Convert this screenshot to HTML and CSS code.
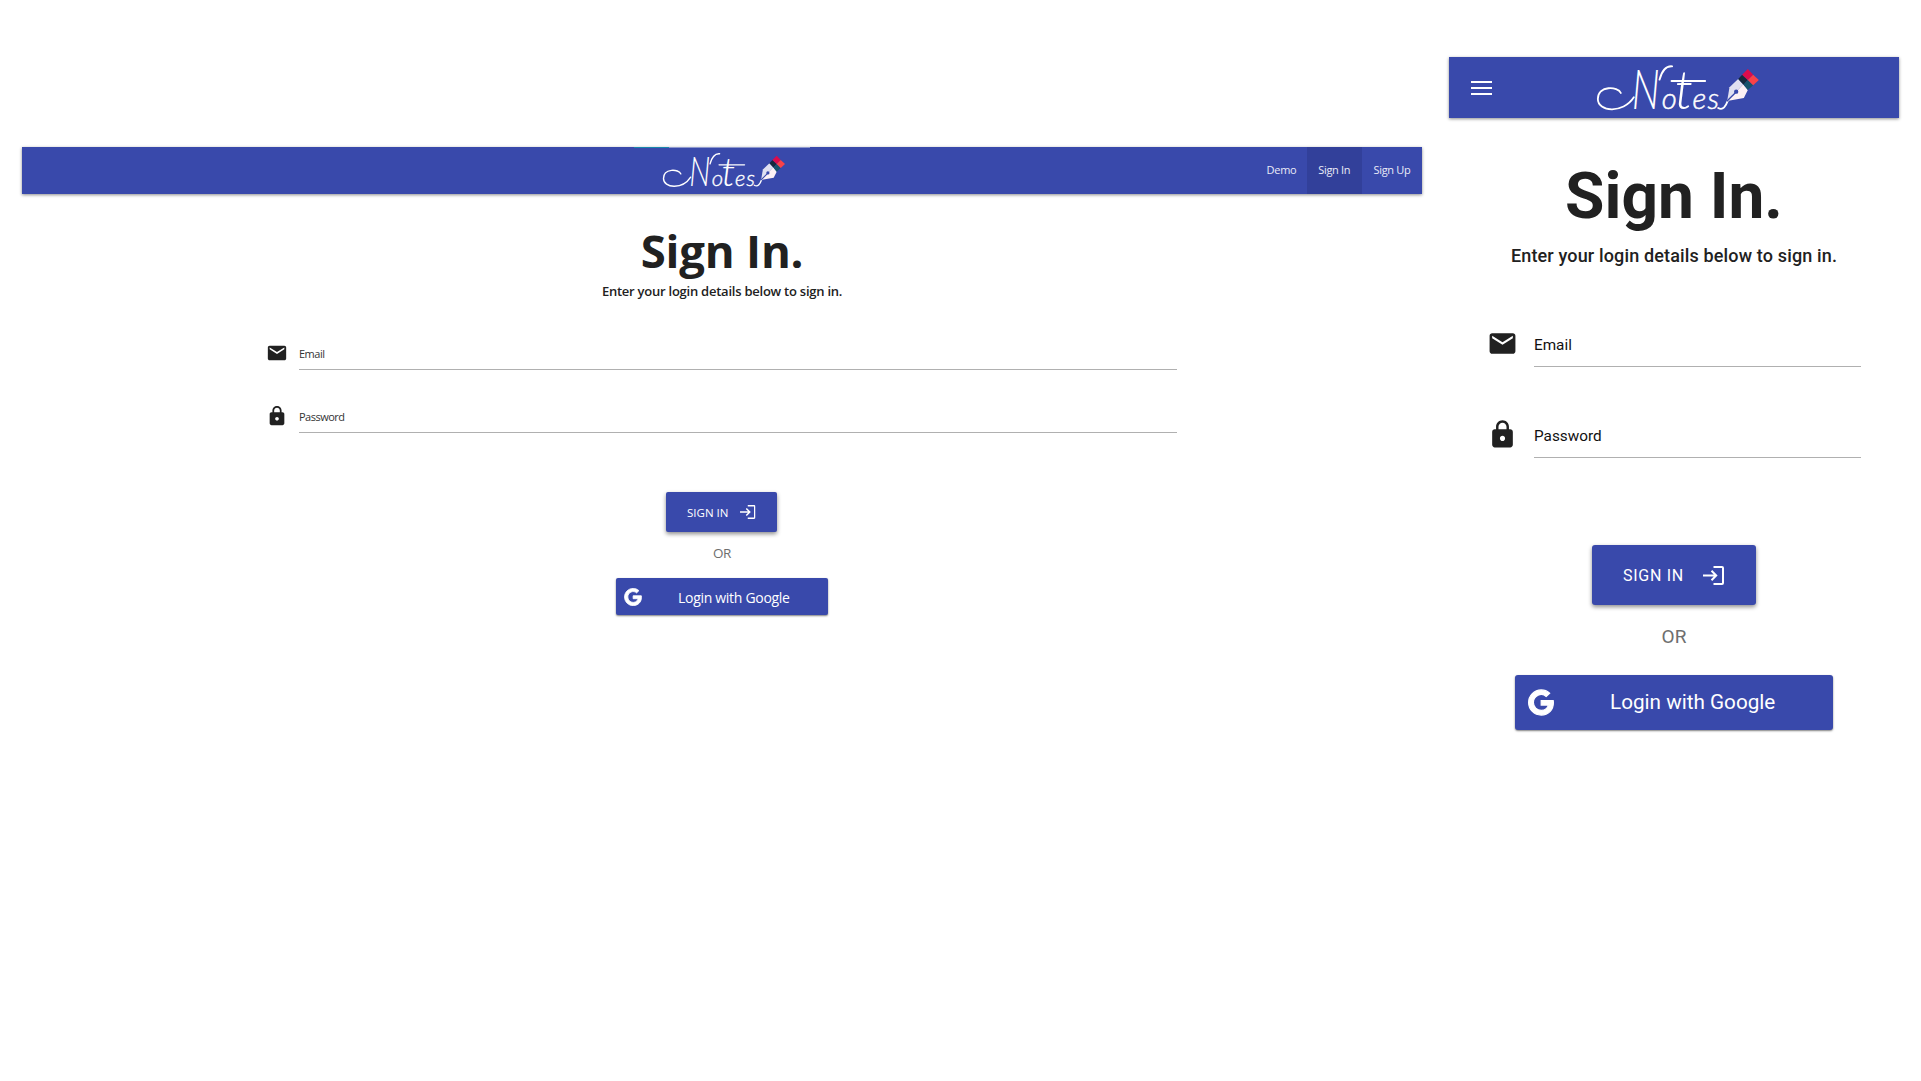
FILE: index.html
```html
<!DOCTYPE html>
<html lang="en">
<head>
<meta charset="utf-8">
<title>Notes – Sign In</title>
<link rel="stylesheet" href="styles.css">
</head>
<body>
<svg class="sprite" aria-hidden="true">
  <symbol id="flourish" viewBox="35 25 485 141" overflow="visible">
    <g fill="none" stroke="#fff" stroke-width="5.500" stroke-linecap="round">
      <path d="M106 112C98 92 37 88 37 130C37 168 112 176 145 125"/>
      <path d="M222 72C229 46 240 30 260 32"/>
      <path d="M258 76H359"/>
      <path d="M398 157C413 166 421 151 427 135"/>
    </g>
    <path fill="#e0e0f1" d="M425 136L432 95L458 70L473 86L452 108Z"/>
    <path fill="#fdf1f5" d="M425 136L452 108L473 86L487 103L475 127Z"/>
    <path stroke="#3949ab" stroke-width="4" d="M424 137L452 109"/>
    <circle cx="452" cy="108" r="6.500" fill="#3949ab"/>
    <path fill="#15293d" d="M458 70L470 57L487 73L474 87Z"/>
    <path fill="#17536b" d="M474 87L487 73L503 89L487 103Z"/>
    <path fill="#dc0c4c" d="M470 57L487 40L503 57L487 73Z"/>
    <path fill="#fa4248" d="M487 73L503 57L520 73L503 89Z"/>
  </symbol>
  <symbol id="mail" viewBox="0 0 24 24"><path d="M20 4H4c-1.100 0-1.990.9-1.990 2L2 18c0 1.100.9 2 2 2h16c1.100 0 2-.9 2-2V6c0-1.100-.9-2-2-2zm0 4l-8 5-8-5V6l8 5 8-5v2z"/></symbol>
  <symbol id="lock" viewBox="0 0 24 24"><path d="M18 8h-1V6c0-2.760-2.240-5-5-5S7 3.240 7 6v2H6c-1.100 0-2 .9-2 2v10c0 1.100.9 2 2 2h12c1.100 0 2-.9 2-2V10c0-1.100-.9-2-2-2zm-6 9c-1.100 0-2-.9-2-2s.9-2 2-2 2 .9 2 2-.9 2-2 2zm3.100-9H8.900V6c0-1.710 1.390-3.100 3.100-3.100s3.100 1.390 3.100 3.100v2z"/></symbol>
  <symbol id="enter" viewBox="0 0 21 19"><path fill="none" stroke="#fff" stroke-width="2" d="M10.500 1H19q1 0 1 1V17q0 1-1 1H10.500M0 9.500H13M8.500 4.800L13.200 9.500L8.500 14.200"/></symbol>
  <symbol id="google" viewBox="-12 -4 512 520"><path fill="#fff" stroke="#fff" stroke-width="24" d="M488 261.800C488 403.300 391.100 504 248 504 110.800 504 0 393.200 0 256S110.800 8 248 8c66.800 0 123 24.500 166.300 64.900l-67.500 64.900C258.500 52.600 94.300 116.600 94.300 256c0 86.500 69.100 156.600 153.700 156.600 98.200 0 135-70.400 140.800-106.900H248v-85.300h236.100c2.300 12.700 3.900 24.900 3.900 41.400z"/></symbol>
</svg>
<main class="showcase">
  <section class="screen desktop">
    <header class="bar">
      <span class="progress"></span>
      <svg class="logo" viewBox="35 25 485 141" role="img" aria-label="Notes">
        <use href="#flourish" x="35" y="25" width="485" height="141"/>
        <text class="logo-initial" x="139" y="161" textLength="84" lengthAdjust="spacingAndGlyphs">N</text>
        <text class="logo-rest" y="161"><tspan x="229">o</tspan><tspan class="logo-tall" x="268">t</tspan><tspan x="321">e</tspan><tspan x="366">s</tspan></text>
      </svg>
      <nav class="links">
        <a class="link">Demo</a><a class="link active">Sign In</a><a class="link">Sign Up</a>
      </nav>
    </header>
    <h1 class="title">Sign In.</h1>
    <p class="subtitle">Enter your login details below to sign in.</p>
    <form class="fields">
      <div class="field"><svg class="icon"><use href="#mail"/></svg><label class="label"><span class="words">Email</span></label></div>
      <div class="field"><svg class="icon"><use href="#lock"/></svg><label class="label"><span class="words">Password</span></label></div>
    </form>
    <button class="submit"><span class="words">SIGN IN</span><svg class="enter"><use href="#enter"/></svg></button>
    <p class="or">OR</p>
    <button class="google"><svg class="g"><use href="#google"/></svg><span class="google-text">Login with Google</span></button>
  </section>
  <section class="screen mobile">
    <header class="bar">
      <span class="menu"><i></i><i></i><i></i></span>
      <svg class="logo" viewBox="35 25 485 141" role="img" aria-label="Notes">
        <use href="#flourish" x="35" y="25" width="485" height="141"/>
        <text class="logo-initial" x="139" y="161" textLength="84" lengthAdjust="spacingAndGlyphs">N</text>
        <text class="logo-rest" y="161"><tspan x="229">o</tspan><tspan class="logo-tall" x="268">t</tspan><tspan x="321">e</tspan><tspan x="366">s</tspan></text>
      </svg>
    </header>
    <h1 class="title">Sign In.</h1>
    <p class="subtitle">Enter your login details below to sign in.</p>
    <form class="fields">
      <div class="field"><svg class="icon"><use href="#mail"/></svg><label class="label"><span class="words">Email</span></label></div>
      <div class="field"><svg class="icon"><use href="#lock"/></svg><label class="label"><span class="words">Password</span></label></div>
    </form>
    <button class="submit"><span class="words">SIGN IN</span><svg class="enter"><use href="#enter"/></svg></button>
    <p class="or">OR</p>
    <button class="google"><svg class="g"><use href="#google"/></svg><span class="google-text">Login with Google</span></button>
  </section>
</main>
</body>
</html>
```
FILE: styles.css
```css
* { box-sizing: border-box; }
body { margin: 0; background: #fff; color: #212121; overflow: hidden; }
h1, p { margin: 0; }
.sprite { position: absolute; width: 0; height: 0; }
.logo { overflow: visible; }
.logo-initial { font: italic 300 168px Lato, sans-serif; fill: #fff; }
.logo-rest { font: italic 300 88px Lato, sans-serif; fill: #fff; stroke: #fff; stroke-width: 1.500; }
.logo-tall { font-size: 160px; stroke-width: 0; }

.showcase { display: flex; align-items: flex-start; gap: 27px; height: 1081px; padding-left: 22px; }
.screen { display: flex; flex-direction: column; align-items: center; white-space: nowrap; }
.bar { position: relative; width: 100%; display: flex; background: #3949ab; box-shadow: 0 1px 3px rgba(0,0,0,.45); }
.title { font-weight: 700; }
.field { display: flex; align-items: center; }
.icon { flex: none; fill: #212121; }
.label { flex: 1; height: 100%; display: flex; align-items: center; border-bottom: 1px solid #b0b0b0; }
.submit, .google { display: flex; align-items: center; padding: 0; border: 0; border-radius: 2px; background: #3949ab; color: #fff; font-family: inherit; }
.submit { box-shadow: 0 2px 4px rgba(0,0,0,.45); }
.google { box-shadow: 0 1px 2px rgba(0,0,0,.5); }
.or { color: #6e6e6e; }

/* wide layout */
.desktop { width: 1400px; margin-top: 147px; font-family: "Open Sans", "Noto Sans", sans-serif; }
.desktop .bar { height: 46.500px; justify-content: flex-end; }
.progress { position: absolute; left: 612px; top: 0; width: 176px; height: 1px; background: linear-gradient(90deg, #1a86ad 0 35px, #8e99cf 35px); }
.desktop .logo { width: 122px; height: 35.500px; margin: 5px 471.500px 0 0; }
.links { display: flex; font-size: 11px; line-height: 46px; letter-spacing: -.3px; color: #e9ebf7; }
.link { width: 50px; text-align: center; }
.link.active { width: 55.500px; background: #32409a; }
.link:last-child { width: 60px; }
.desktop .title { margin-top: 31.500px; font-size: 45.500px; line-height: 50px; letter-spacing: -.2px; }
.desktop .subtitle { margin-top: 6px; font-size: 13px; font-weight: 600; line-height: 20px; letter-spacing: -.24px; }
.desktop .fields { width: 911px; margin: 36px 1px 0 0; display: grid; gap: 30px; }
.desktop .field { height: 33px; gap: 11px; }
.desktop .icon { width: 22px; height: 22px; margin-bottom: 1px; }
.desktop .label { font-size: 11px; letter-spacing: -.5px; color: #333; }
.desktop .submit { width: 111px; height: 40px; margin: 59px 1px 0 0; padding-left: 21px; font-size: 11.500px; gap: 13px; }
.desktop .submit .words { width: 40px; }
.desktop .enter { width: 15.500px; height: 14px; }
.desktop .or { margin-top: 11px; font-size: 13.500px; line-height: 20px; letter-spacing: -.3px; }
.desktop .google { width: 212px; height: 37px; margin-top: 15px; padding-left: 8px; font-size: 14px; letter-spacing: -.3px; }
.desktop .google-text { padding-top: 1px; }
.desktop .g { width: 18px; height: 18px; margin-right: 36px; }

/* narrow layout */
.mobile { width: 450px; margin-top: 57px; font-family: Roboto, sans-serif; }
.mobile .bar { height: 61px; }
.menu { width: 21px; margin: 24px 0 0 22px; display: flex; flex-direction: column; gap: 3.500px; }
.menu i { height: 2.300px; background: #fff; }
.mobile .logo { width: 162px; height: 47px; margin: 6.500px 0 0 105px; }
.mobile .title { margin-top: 44px; font-size: 64px; line-height: 70px; }
.mobile .subtitle { margin-top: 12px; font-size: 18px; font-weight: 500; line-height: 24px; letter-spacing: .15px; }
.mobile .fields { width: 374px; margin: 55px 0 0; display: grid; gap: 47px; }
.mobile .field { height: 44px; gap: 16px; }
.mobile .icon { width: 31px; height: 31px; margin-bottom: 4px; }
.mobile .label { font-size: 15.300px; color: #111; }
.mobile .submit { width: 164px; height: 60px; margin-top: 87px; padding-left: 31px; font-size: 16px; letter-spacing: .7px; gap: 19px; border-radius: 3px; }
.mobile .submit .words { width: 61px; }
.mobile .enter { width: 21px; height: 19px; }
.mobile .or { margin-top: 20px; font-size: 19px; line-height: 24px; }
.mobile .google { width: 318px; height: 55px; margin-top: 26px; padding-left: 13px; font-size: 20.700px; border-radius: 3px; }
.mobile .google-text { padding-bottom: 2px; }
.mobile .g { width: 26px; height: 27px; margin-right: 56px; }
```
